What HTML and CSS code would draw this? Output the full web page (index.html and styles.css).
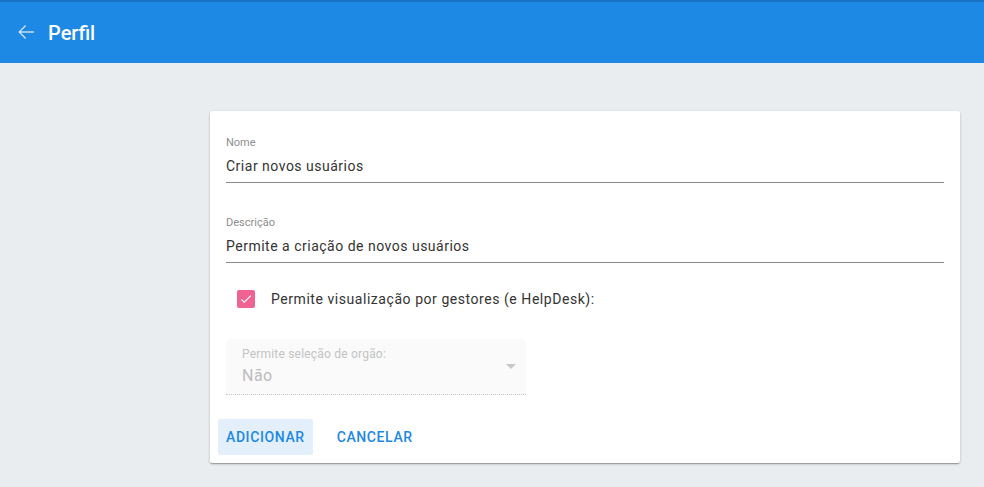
FILE: index.html
```html
<!DOCTYPE html>
<html lang="pt">
<head>
<meta charset="utf-8">
<link rel="stylesheet" href="styles.css">
</head>
<body>
<header class="toolbar">
  <svg class="back" width="24" height="24" viewBox="0 0 24 24"><path d="M20 11.25H6.9l5.3-5.3-1-1L4.2 12l7 7 1-1-5.3-5.25H20z" fill="currentColor"/></svg>
  <h1 class="title">Perfil</h1>
</header>
<main class="content">
  <section class="card">
    <div class="field">
      <label class="field-label">Nome</label>
      <div class="field-value">Criar novos usuários</div>
    </div>
    <div class="field">
      <label class="field-label">Descrição</label>
      <div class="field-value">Permite a criação de novos usuários</div>
    </div>
    <div class="check-row">
      <span class="checkbox"><svg width="14" height="14" viewBox="0 0 24 24"><path d="M9 16.2L4.8 12l-1.4 1.4L9 19 21 7l-1.4-1.4L9 16.2z" fill="#fff"/></svg></span>
      <span class="check-label">Permite visualização por gestores (e HelpDesk):</span>
    </div>
    <div class="select">
      <div class="select-label">Permite seleção de orgão:</div>
      <div class="select-value">Não</div>
      <span class="caret"></span>
    </div>
    <div class="actions">
      <button class="btn btn-primary">ADICIONAR</button>
      <button class="btn">CANCELAR</button>
    </div>
  </section>
</main>
</body>
</html>
```
FILE: styles.css
```css
* { box-sizing: border-box; }
html, body { margin: 0; padding: 0; }
body {
  background: #e9edf0;
  font-family: Roboto, "Noto Sans", sans-serif;
  width: 984px;
  height: 487px;
  overflow: hidden;
}
.toolbar {
  height: 63px;
  background: #1e88e5;
  border-top: 2px solid #1872c4;
  display: flex;
  align-items: center;
  padding-left: 14px;
  color: #fff;
}
.back { color: #c4e0f9; margin-right: 10px; margin-top: -2px; }
.title {
  margin: 0;
  font-size: 20px;
  font-weight: 500;
  margin-top: 0;
}
.content {
  padding: 48px 24px 0 210px;
}
.card {
  width: 750px;
  height: 352px;
  background: #fff;
  border-radius: 2px;
  box-shadow: 0 1px 3px rgba(0,0,0,0.2), 0 1px 1px rgba(0,0,0,0.14), 0 2px 1px -1px rgba(0,0,0,0.12);
  padding: 25px 16px 0 16px;
}
.field {
  border-bottom: 1px solid #8a8a8a;
  padding-bottom: 7px;
  margin-bottom: 33px;
}
.field-label {
  display: block;
  font-size: 11px;
  color: #8e8e8e;
  line-height: 14px;
}
.field-value {
  font-size: 14px;
  color: #333;
  letter-spacing: 0.5px;
  line-height: 18px;
  margin-top: 7px;
}
.check-row {
  display: flex;
  align-items: center;
  padding-left: 11px;
  margin-top: -6px;
  height: 18px;
}
.checkbox {
  width: 18px;
  height: 18px;
  border-radius: 2px;
  background: #f06292;
  display: flex;
  align-items: center;
  justify-content: center;
  margin-right: 16px;
}
.check-label {
  font-size: 14px;
  color: #333;
  letter-spacing: 0.55px;
}
.select {
  position: relative;
  margin-top: 31px;
  width: 300px;
  height: 56px;
  background: #fafafa;
  border-top-left-radius: 4px;
  border-top-right-radius: 4px;
  border-bottom: 1px dotted #c8c8c8;
  padding: 8px 16px 0 16px;
}
.select-label {
  font-size: 12px;
  color: #c4c4c4;
  line-height: 14px;
  letter-spacing: 0.2px;
}
.select-value {
  font-size: 16px;
  color: #bdbdbd;
  margin-top: 5px;
  line-height: 20px;
  letter-spacing: 0.5px;
}
.caret {
  position: absolute;
  right: 10px;
  top: 25px;
  width: 0;
  height: 0;
  border-left: 5px solid transparent;
  border-right: 5px solid transparent;
  border-top: 5px solid #c8c8c8;
}
.actions {
  display: flex;
  gap: 16px;
  margin-left: -8px;
  margin-top: 24px;
}
.btn {
  height: 36px;
  padding: 0 8px;
  border: none;
  background: transparent;
  color: #1e88e5;
  font-family: Roboto, sans-serif;
  font-size: 14px;
  font-weight: 500;
  letter-spacing: 0.6px;
  border-radius: 2px;
}
.btn-primary { background: #e3f0fc; min-width: 94px; }
```
